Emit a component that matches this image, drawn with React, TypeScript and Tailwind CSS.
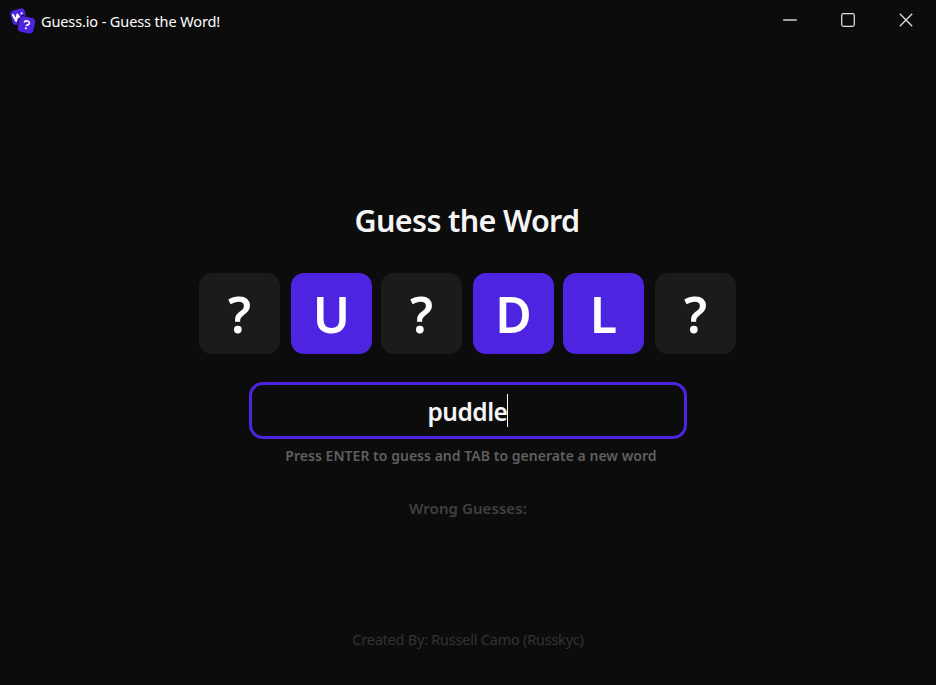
import React from "react";

const FONT = "font-['Noto_Sans','Open_Sans',sans-serif]";

type TileProps = { letter: string; revealed?: boolean; gap?: string };

function Tile({ letter, revealed = false, gap = "" }: TileProps) {
  return (
    <div
      className={`flex h-[81px] w-[81px] shrink-0 items-center justify-center rounded-[13px] pt-px text-[50px] leading-none font-semibold text-white ${
        revealed ? "bg-[#4d24e0]" : "bg-[#1b1b1b]"
      } ${gap}`}
    >
      {letter}
    </div>
  );
}

function AppLogo() {
  return (
    <svg width="26" height="27" viewBox="0 0 26 27" className="shrink-0">
      <g transform="rotate(-15 8.5 8.5)">
        <rect x="1.2" y="1.2" width="14.8" height="14.8" rx="3.6" fill="#4d24e0" />
        <path d="M3.4 4.8l1.7 7.2 2.8-5.6 1.5 4" fill="none" stroke="#fff" strokeWidth="2.1" strokeLinejoin="round" />
        <circle cx="12.4" cy="6.2" r="1.1" fill="#fff" />
      </g>
      <g transform="rotate(12 16.5 17)">
        <rect x="8" y="8.5" width="16.8" height="16.8" rx="4.4" fill="#4d24e0" stroke="#0c0c0c" strokeWidth="0.8" />
        <path d="M13.8 15c.2-3 5.4-2.7 5.1.1-.2 1.6-2.4 1.4-2.4 3" fill="none" stroke="#fff" strokeWidth="1.7" />
        <circle cx="16.5" cy="20.3" r="1.05" fill="#fff" />
      </g>
    </svg>
  );
}

function WindowControls() {
  return (
    <div className="mr-px mb-0.5 ml-auto flex h-10 text-[#e0e0e0]">
      <button aria-label="Minimize" className="flex w-[58px] items-center justify-center">
        <svg width="16" height="16" fill="none" stroke="currentColor">
          <path d="M1.2 8h13.6" strokeWidth="1.4" />
        </svg>
      </button>
      <button aria-label="Maximize" className="flex w-[58px] items-center justify-center">
        <svg width="16" height="16" fill="none" stroke="currentColor">
          <rect x="1.7" y="1.7" width="12.6" height="12.6" rx="1.8" strokeWidth="1.25" />
        </svg>
      </button>
      <button aria-label="Close" className="flex w-[58px] items-center justify-center">
        <svg width="16" height="16" fill="none" stroke="currentColor">
          <path d="M1.8 1.8l12.4 12.4M14.2 1.8L1.8 14.2" strokeWidth="1.3" />
        </svg>
      </button>
    </div>
  );
}

export default function App() {
  return (
    <div className={`flex h-[685px] w-[936px] flex-col overflow-hidden bg-[#0c0c0c] ${FONT}`}>
      <header className="flex h-[42px] shrink-0 items-center pl-[10px]">
        <AppLogo />
        <span className="ml-[5px] text-[14.5px] leading-5 tracking-[-0.12px] whitespace-nowrap text-white">
          Guess.io - Guess the Word!
        </span>
        <WindowControls />
      </header>

      <main className="flex flex-1 flex-col items-center">
        <h1 className="mt-[157px] mr-[2px] h-[42px] text-[30.5px] leading-[42px] font-semibold tracking-[-0.65px] whitespace-nowrap text-[#f5f5f5]">
          Guess the Word
        </h1>

        <div className="mt-8 flex h-[81px] w-[538px]">
          <Tile letter="?" />
          <Tile letter="U" revealed gap="ml-[11px]" />
          <Tile letter="?" gap="ml-[9px]" />
          <Tile letter="D" revealed gap="ml-[11px]" />
          <Tile letter="L" revealed gap="ml-[9px]" />
          <Tile letter="?" gap="ml-[11px]" />
        </div>

        <div className="mt-7 flex h-[57px] w-[438px] items-center justify-center rounded-[14px] border-3 border-[#4d24e0]">
          <span className="pt-[2px] text-[24.5px] leading-[34px] font-semibold tracking-[-0.5px] text-[#f5f5f5]">puddle</span>
          <span className="h-[33px] w-px bg-white" />
        </div>

        <p className="mt-[6px] ml-[6px] h-[22px] text-[14px] leading-[22px] font-semibold tracking-[0.03px] whitespace-nowrap text-[#5f5f5f]">
          Press ENTER to guess and TAB to generate a new word
        </p>
        <p className="mt-[30px] h-[22px] text-[15px] leading-[22px] font-semibold tracking-[0.07px] whitespace-nowrap text-[#404040]">
          Wrong Guesses:
        </p>
        <footer className="mt-[109px] h-[22px] text-[14.5px] leading-[22px] tracking-[-0.23px] whitespace-nowrap text-[#333333]">
          Created By: Russell Camo (Russkyc)
        </footer>
      </main>
    </div>
  );
}
